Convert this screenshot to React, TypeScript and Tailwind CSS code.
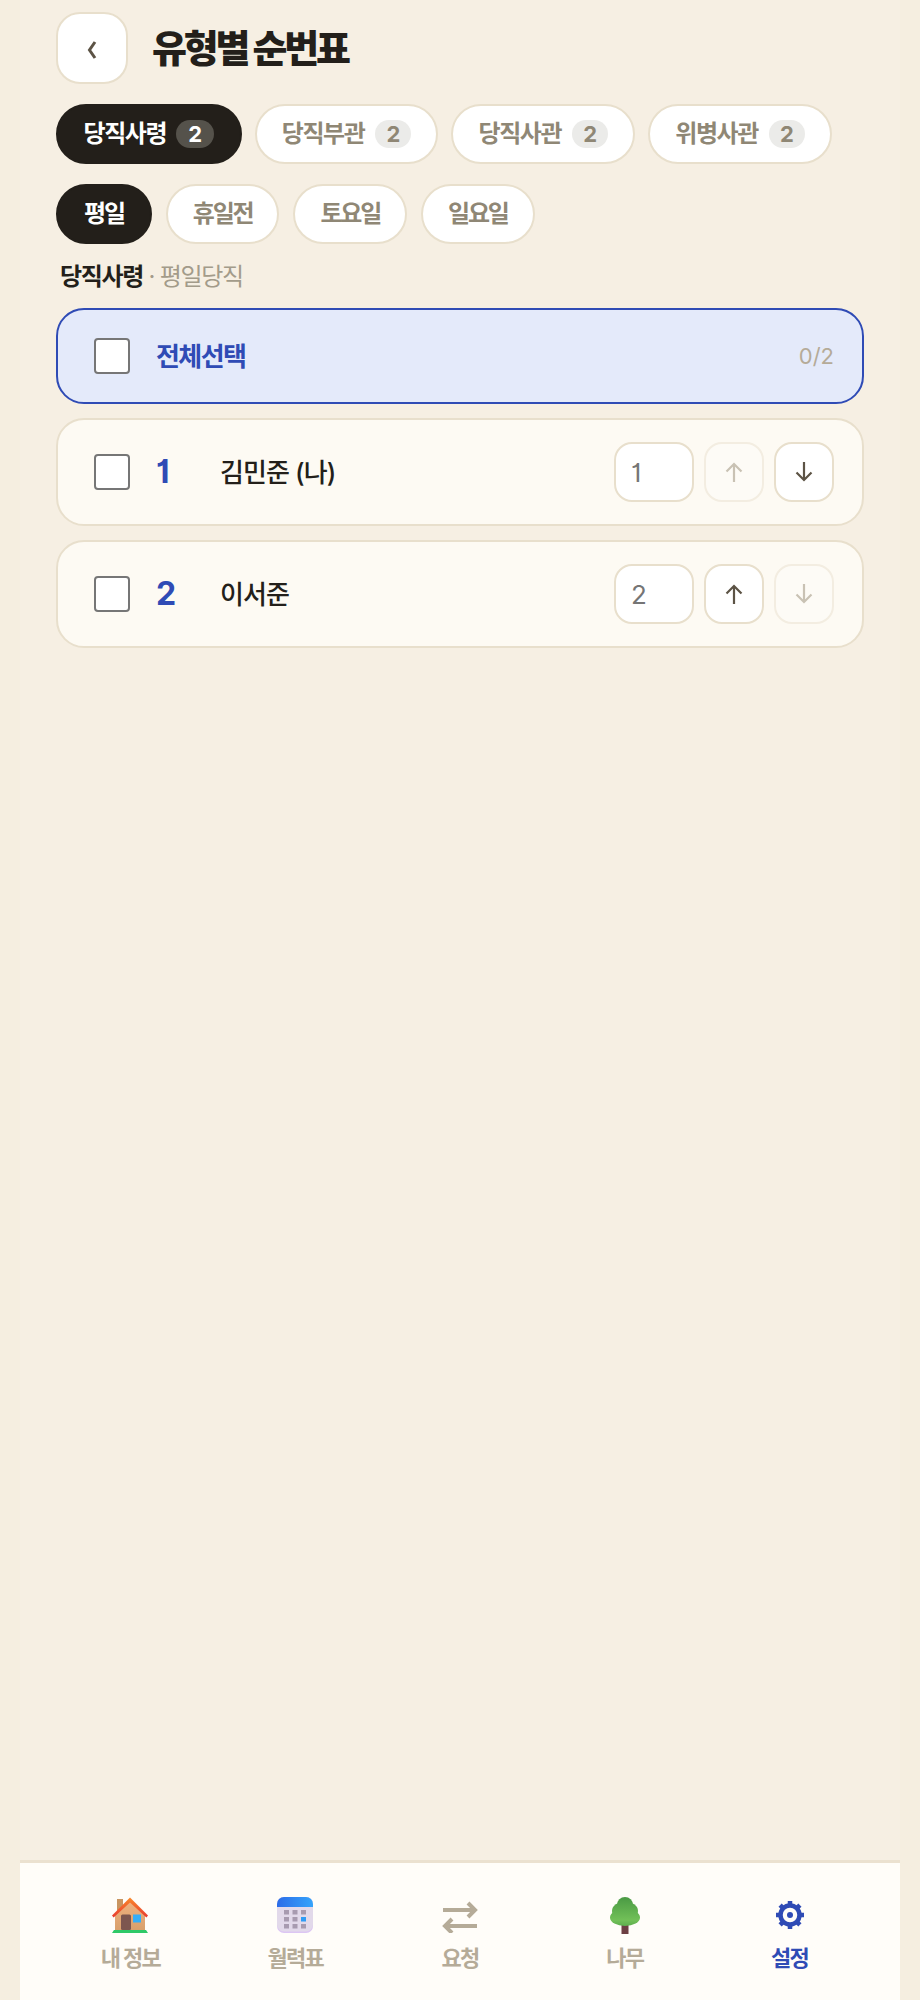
import { ReactNode } from "react";

const FONT = "font-['Inter','Noto_Sans_CJK_KR',sans-serif]";

const roles = ["당직사령", "당직부관", "당직사관", "위병사관"];
const days = ["평일", "휴일전", "토요일", "일요일"];

function Arrow({ dir, disabled }: { dir: "up" | "down"; disabled: boolean }) {
  return (
    <button
      className={[
        "flex h-[60px] w-[60px] items-center justify-center rounded-[18px] border-2",
        disabled ? "border-[#f3ede1] bg-[#fdfbf6]" : "border-[#e8dfcc] bg-white",
      ].join(" ")}
    >
      <svg
        width="24"
        height="24"
        viewBox="0 0 24 24"
        fill="none"
        stroke={disabled ? "#c9c2b4" : "#5c5345"}
        strokeWidth="2.200"
      >
        {dir === "up" ? (
          <path d="M12 22V4M4.500 11.500 12 4l7.500 7.500" />
        ) : (
          <path d="M12 2v18M4.500 12.500 12 20l7.500-7.500" />
        )}
      </svg>
    </button>
  );
}

function Check() {
  return <input type="checkbox" className="h-9 w-9 shrink-0 appearance-none rounded-[4px] border-2 border-[#767676] bg-white" />;
}

function PersonRow({ rank, name, first, last }: { rank: number; name: string; first: boolean; last: boolean }) {
  return (
    <div className="flex h-[108px] items-center rounded-[28px] border-2 border-[#e8dfcc] bg-[#fdfaf3] pl-[36px] pr-[28px]">
      <Check />
      <span className="ml-[26px] w-[64px] text-[32px] font-bold text-[#2f4bb5] [font-feature-settings:'cv01']">{rank}</span>
      <span className="flex-1 text-[26px] font-medium tracking-[-0.900px] text-[#231f1a]">{name}</span>
      <div className="flex h-[60px] w-[80px] items-center rounded-[18px] border-2 border-[#e8dfcc] bg-white pl-[15px] text-[26px] text-[#757575] [font-feature-settings:'cv01']">
        {rank}
      </div>
      <div className="ml-[10px]">
        <Arrow dir="up" disabled={first} />
      </div>
      <div className="ml-[10px]">
        <Arrow dir="down" disabled={last} />
      </div>
    </div>
  );
}

function HouseIcon() {
  return (
    <svg width="36" height="36" viewBox="0 0 36 36">
      <defs>
        <linearGradient id="wall" x1="0" y1="0" x2="0" y2="1">
          <stop offset="0" stopColor="#f0b27f" />
          <stop offset="1" stopColor="#d9a06c" />
        </linearGradient>
        <linearGradient id="roof" x1="0" y1="0" x2="0" y2="1">
          <stop offset="0" stopColor="#f98a2c" />
          <stop offset="1" stopColor="#e8392f" />
        </linearGradient>
      </defs>
      <rect x="5" y="2" width="6" height="14" fill="#c99561" />
      <path d="M3 18 18 3l15 15v15H3z" fill="url(#wall)" />
      <path d="M0 18.500 18 0.500l18 18-1.600 2L18 5.500 1.600 20.500z" fill="url(#roof)" />
      <rect x="9" y="17.500" width="10" height="15.500" rx="1.500" fill="#7d564f" />
      <rect x="21" y="17.500" width="8" height="8" fill="#35aef8" />
      <path d="M2 33h32l2 3H0z" fill="#2fc968" />
    </svg>
  );
}

function CalendarIcon() {
  const cells = [
    [7, 13], [15.500, 13], [24, 13],
    [7, 20], [15.500, 20], [24, 20],
    [7, 27], [15.500, 27], [24, 27],
  ];
  return (
    <svg width="36" height="36" viewBox="0 0 36 36">
      <defs>
        <linearGradient id="calTop" x1="0" y1="0" x2="1" y2="0">
          <stop offset="0" stopColor="#2c6ce8" />
          <stop offset="1" stopColor="#35a4fb" />
        </linearGradient>
      </defs>
      <rect width="36" height="36" rx="7" fill="#dcc6f3" />
      <rect width="36" height="34.500" rx="7" fill="#e2d9ea" />
      <path d="M0 10V7a7 7 0 0 1 7-7h22a7 7 0 0 1 7 7v3z" fill="url(#calTop)" />
      {cells.map(([x, y], i) => (
        <rect key={i} x={x} y={y} width="5" height="4.500" fill={i === 5 ? "#2f9cf5" : "#a89bb0"} />
      ))}
    </svg>
  );
}

function SwapIcon() {
  return (
    <svg width="36" height="36" viewBox="0 0 36 36" fill="none" stroke="#b5ab98" strokeWidth="4">
      <path d="M1 13h32M26 6l7 7-7 7" />
      <path d="M35 29H3M10 22l-7 7 7 7" />
    </svg>
  );
}

function TreeIcon() {
  return (
    <svg width="30" height="37" viewBox="0 0 30 37">
      <defs>
        <linearGradient id="leaf" gradientUnits="userSpaceOnUse" x1="0" y1="0" x2="0" y2="29">
          <stop offset="0" stopColor="#4a9a44" />
          <stop offset="0.800" stopColor="#72c058" />
          <stop offset="1" stopColor="#5dae4e" />
        </linearGradient>
      </defs>
      <rect x="11.500" y="27" width="7" height="10" fill="#6d3f43" />
      <g fill="url(#leaf)">
        <circle cx="15" cy="8" r="8" />
        <ellipse cx="15" cy="14" rx="13" ry="9.500" />
        <ellipse cx="15" cy="20.500" rx="15" ry="8.500" />
      </g>
    </svg>
  );
}

function GearIcon() {
  return (
    <svg width="30" height="30" viewBox="0 0 30 30" fill="none">
      <circle cx="15" cy="15" r="9.500" stroke="#2f4bb5" strokeWidth="4.500" />
      <circle cx="15" cy="15" r="3" fill="#2f4bb5" />
      {[0, 45, 90, 135, 180, 225, 270, 315].map((a) => (
        <rect key={a} x="12.750" y="1" width="4.500" height="4" fill="#2f4bb5" transform={`rotate(${a} 15 15)`} />
      ))}
    </svg>
  );
}

function NavItem({ icon, label, active }: { icon: ReactNode; label: string; active?: boolean }) {
  return (
    <div className="flex flex-col items-center">
      <div className="flex h-[40px] w-[40px] items-center justify-center">{icon}</div>
      <span
        className={[
          "mt-[7px] text-[22px] font-bold leading-[32px] tracking-[-1.700px]",
          active ? "text-[#2f4bb5]" : "text-[#b5ab98]",
        ].join(" ")}
      >
        {label}
      </span>
    </div>
  );
}

export default function App() {
  return (
    <div className={`${FONT} flex h-[2000px] justify-center overflow-hidden bg-[#f5eee0]`}>
      <div className="flex w-[880px] flex-col bg-[#f6efe3]">
        <div className="px-[36px] pt-[12px]">
          {/* header */}
          <div className="flex items-center">
            <button className="flex h-[72px] w-[72px] items-center justify-center rounded-[24px] border-2 border-[#e8dfcc] bg-white">
              <svg className="mt-[4px]" width="12" height="20" viewBox="0 0 12 20" fill="none" stroke="#5c5345" strokeWidth="3">
                <path d="M9 2 3.500 10 9 18" />
              </svg>
            </button>
            <h1 className="ml-[24px] text-[38px] font-extrabold tracking-[-3.200px] text-[#231f1a]">유형별 순번표</h1>
          </div>

          {/* 유형 탭 */}
          <div className="mt-[20px] flex gap-[13px]">
            {roles.map((r, i) => (
              <button
                key={r}
                className={[
                  "flex h-[60px] items-center rounded-full border-2 text-[24px] font-bold tracking-[-1.400px]",
                  i === 0
                    ? "gap-[10px] border-[#231f1a] bg-[#231f1a] px-[25.500px] text-white"
                    : "gap-[11px] border-[#e8dfcc] bg-white px-[25px] text-[#8f8775]",
                ].join(" ")}
              >
                {r}
                <span
                  className={[
                    "flex h-[28px] items-center justify-center rounded-full text-[22px] tracking-normal",
                    i === 0 ? "w-[38px] bg-[#55524b]" : "w-[36px] bg-[#ebebe9]",
                  ].join(" ")}
                >
                  2
                </span>
              </button>
            ))}
          </div>

          {/* 요일 탭 */}
          <div className="mt-[20px] flex gap-[14px]">
            {days.map((d, i) => (
              <button
                key={d}
                className={[
                  "flex h-[60px] items-center rounded-full border-2 text-[24px] font-bold tracking-[-2.200px]",
                  i === 0 ? "border-[#231f1a] bg-[#231f1a] px-[26px] text-white" : "border-[#e8dfcc] bg-white px-[25px] text-[#8f8775]",
                ].join(" ")}
              >
                {d}
              </button>
            ))}
          </div>

          <p className="ml-[4px] mt-[16px] text-[24px] leading-[34px] tracking-[-1.300px] text-[#a39b8a]">
            <span className="font-bold text-[#231f1a]">당직사령</span> · 평일당직
          </p>

          <div className="mt-[14px] flex flex-col gap-[14px]">
            <div className="flex h-[96px] items-center rounded-[28px] border-2 border-[#2f4bb5] bg-[#e4eafa] pl-[36px] pr-[28px]">
              <Check />
              <span className="ml-[26px] flex-1 text-[26px] font-bold tracking-[-1.600px] text-[#2f4bb5]">전체선택</span>
              <span className="text-[22px] text-[#b5ab98]">0/2</span>
            </div>
            <PersonRow rank={1} name="김민준 (나)" first last={false} />
            <PersonRow rank={2} name="이서준" first={false} last />
          </div>
        </div>

        {/* bottom nav */}
        <nav className="mt-auto grid h-[140px] grid-cols-5 border-t-[3px] border-[#ebe1d0] bg-[#fffdf9] px-[28px] pt-[32px]">
          <NavItem icon={<HouseIcon />} label="내 정보" />
          <NavItem icon={<CalendarIcon />} label="월력표" />
          <NavItem icon={<SwapIcon />} label="요청" />
          <NavItem icon={<TreeIcon />} label="나무" />
          <NavItem icon={<GearIcon />} label="설정" active />
        </nav>
      </div>
    </div>
  );
}
